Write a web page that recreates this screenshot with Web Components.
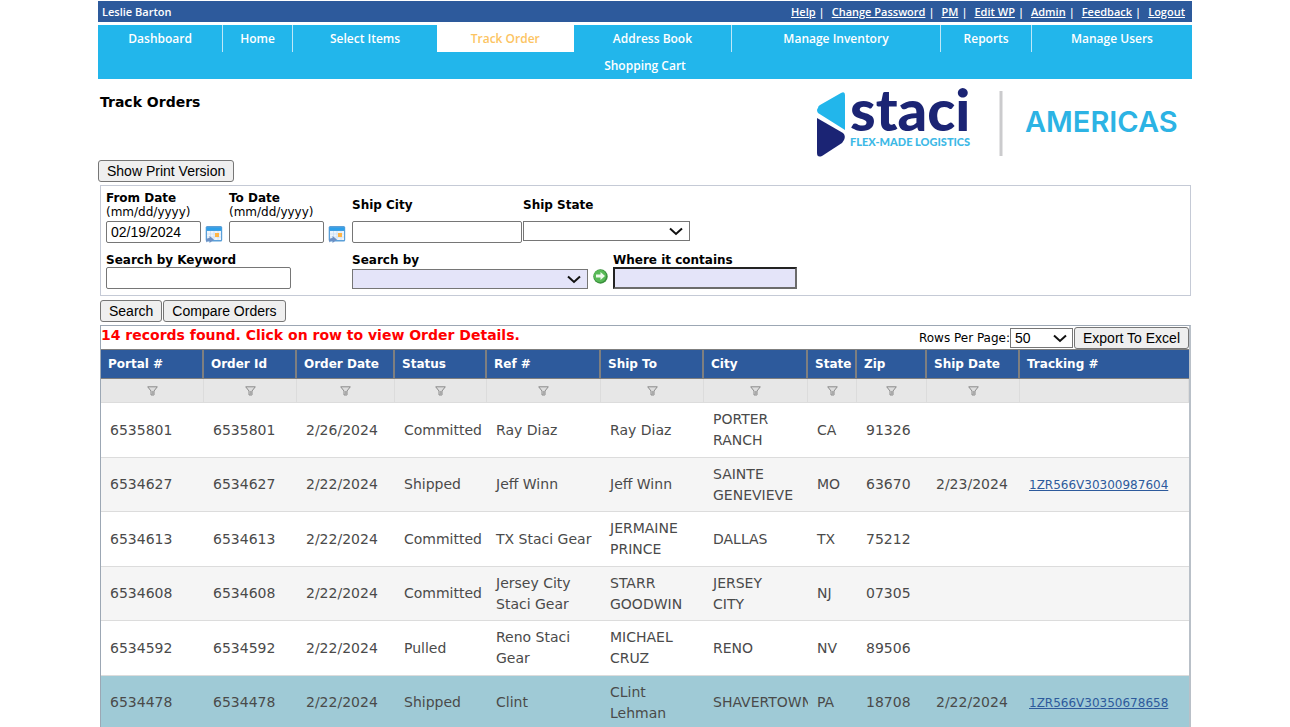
<!DOCTYPE html>
<html lang="en">
<head>
<meta charset="utf-8">
<title>Track Orders</title>
<style>
body { margin: 0; background: #fff; color: #000; font: 12px/14px "DejaVu Sans", Verdana, sans-serif; }
</style>
</head>
<body>
<track-orders-page></track-orders-page>
<script>
const controls = `
  *, *::before { box-sizing: border-box; }
  button { height: 22px; margin: 0; padding: 0 8px; border: 1px solid #767676; border-radius: 3px; background: #efefef; color: #000;
    font: 14px/20px "Liberation Sans", Arial, sans-serif; white-space: nowrap; }
  input, select { margin: 0; padding: 0 4px; border: 1px solid #767676; border-radius: 2px; background: #fff; color: #000;
    font: 14px/18px "Liberation Sans", Arial, sans-serif; }
  input { height: 22px; }
  select { height: 20px; appearance: none; width: 100%; border-radius: 0; display: block; }
  .drop { position: relative; display: block; }
  .drop svg { position: absolute; right: 7px; top: 6px; width: 14px; height: 9px; pointer-events: none; }
`;
const chevron = `<svg viewBox="0 0 14 9" aria-hidden="true"><path d="M1 1.5 7 7 13 1.5" fill="none" stroke="#111" stroke-width="2"/></svg>`;

function define(name, css, html) {
  const tpl = document.createElement('template');
  tpl.innerHTML = `<style>${css}</style>${html}`;
  customElements.define(name, class extends HTMLElement {
    constructor() {
      super();
      this.attachShadow({ mode: 'open' }).append(tpl.content.cloneNode(true));
    }
  });
}

define('top-bar', `
  :host { display: flex; justify-content: space-between; align-items: center; height: 21px; padding: 0 7px 0 4px;
    background: #2d5a9c; color: #fff; font: 600 11px/21px "Open Sans", sans-serif; }
  nav { display: flex; }
  a { color: inherit; }
  i { font-style: normal; margin: 0 7px 0 3px; }
`, `<span>Leslie Barton</span>
  <nav><a href="#">Help</a><i>|</i><a href="#">Change Password</a><i>|</i><a href="#">PM</a><i>|</i><a href="#">Edit WP</a><i>|</i><a href="#">Admin</a><i>|</i><a href="#">Feedback</a><i>|</i><a href="#">Logout</a></nav>`);

define('nav-item', `
  :host { display: block; flex: var(--w) 1 0; height: 27px; border-right: 1px solid #bfe8f8; box-sizing: border-box; text-align: center; }
  :host(:last-of-type), :host([active]) { border-color: transparent; }
  :host([plain]) { border: 0; }
  :host([active]) { background: #fff; color: #fcc462; }
  a { display: block; color: inherit; text-decoration: none; }
`, `<a href="#"><slot></slot></a>`);

define('main-nav', `
  :host { display: block; background: #22b6eb; color: #fff; font: 600 12px/27px "Open Sans", sans-serif; }
  nav { display: flex; }
`, `<nav>
    <nav-item style="--w:125">Dashboard</nav-item><nav-item style="--w:69">Home</nav-item>
    <nav-item style="--w:145" plain>Select Items</nav-item><nav-item style="--w:137" active>Track Order</nav-item>
    <nav-item style="--w:157">Address Book</nav-item><nav-item style="--w:210">Manage Inventory</nav-item>
    <nav-item style="--w:90">Reports</nav-item><nav-item style="--w:161" plain>Manage Users</nav-item>
  </nav>
  <nav><nav-item style="--w:1" plain>Shopping Cart</nav-item></nav>`);

define('brand-logo', `
  :host { display: block; }
  svg { display: block; width: 376px; height: 70px; overflow: visible; }
`, `<svg viewBox="0 0 376 70" role="img" aria-label="staci Americas">
    <path d="M2 18Q0 20 2 23L29 40V5Q29 1 25 3L4 15Q2 16 2 18Z" fill="#22b6eb"/>
    <path d="M1 28 27 43Q30 46 28 50L26 53 6 66Q1 68 1 63Z" fill="#1b2474"/>
    <text x="34" y="41" font-family="Lato, sans-serif" font-weight="900" font-size="58" fill="#1b2474">staci</text>
    <text x="34" y="56" font-family="Lato, sans-serif" font-weight="900" font-size="11" fill="#3db9e6">FLEX-MADE LOGISTICS</text>
    <path d="M185 1V66" stroke="#cbcbcd" stroke-width="3"/>
    <text x="209" y="42" font-family="Inter, sans-serif" font-weight="600" font-size="29" fill="#2cb3e4">AMERICAS</text>
  </svg>`);

define('calendar-button', `
  :host { display: block; width: 18px; height: 18px; }
  button { display: block; width: 18px; height: 18px; padding: 0; border: 0; background: none; }
  svg { display: block; }
`, `<button type="button" aria-label="Pick a date"><svg width="18" height="18" viewBox="0 0 18 18">
    <rect x=".7" y="1" width="16.5" height="15.5" rx="1.5" fill="#5b9fd8"/>
    <path d="M1.500 2.500h15v3h-15z" fill="#2da0ea"/><path d="M2 6h14v9H2z" fill="#eef5fc"/>
    <path d="M2 9h14M2 12h14M5.500 6v9M9 6v9M13 6v9" stroke="#c8dcf0" stroke-width=".7"/>
    <path d="M10 8h4v4h-4z" fill="#ffb545"/>
    <path d="M1.500 17.500Q0 13 4.500 13V11L9 14.500 4.500 18V15.500Q2.500 15.500 1.500 17.500Z" fill="#6c8fc4"/></svg></button>`);

define('search-form', controls + `
  :host { display: block; }
  form { display: flex; flex-direction: column; border: 1px solid #c5cad6; padding: 5px; height: 111px; }
  .row { display: flex; align-items: flex-end; }
  .row + .row { margin-top: 10px; }
  label { display: block; font-weight: 700; }
  label small { display: block; font: 12px/14px "DejaVu Sans", Verdana, sans-serif; }
  .date { width: 123px; }
  .date div { display: flex; gap: 4px; margin-top: 2px; align-items: flex-start; }
  .date input { width: 95px; }
  calendar-button { margin-top: 4px; }
  .city { width: 170px; margin-right: 1px; }
  .city input { width: 100%; display: block; margin-top: 9px; }
  .state { width: 167px; }
  .state .drop { margin: 9px 0 2px; }
  .key { width: 246px; }
  .key input { width: 185px; display: block; }
  .by { width: 236px; }
  .by .drop { margin-top: 2px; }
  .by select, .where input { background: #e4e4f9; }
  .where input { width: 184px; display: block; border: 2px solid #6b6b6b; border-top-color: #222; border-left-color: #222; border-radius: 0; }
  .go { width: 15px; height: 15px; padding: 0; border: 0; background: none; margin: 0 5px 5px; }
  .go svg { display: block; }
`, `<form>
    <div class="row">
      <div class="date"><label for="from">From Date<small>(mm/dd/yyyy)</small></label><div><input id="from" value="02/19/2024"><calendar-button></calendar-button></div></div>
      <div class="date"><label for="to">To Date<small>(mm/dd/yyyy)</small></label><div><input id="to"><calendar-button></calendar-button></div></div>
      <div class="city"><label for="city">Ship City</label><input id="city"></div>
      <div class="state"><label for="state">Ship State</label><span class="drop"><select id="state"><option></option></select>${chevron}</span></div>
    </div>
    <div class="row">
      <div class="key"><label for="key">Search by Keyword</label><input id="key"></div>
      <div class="by"><label for="by">Search by</label><span class="drop"><select id="by"><option></option></select>${chevron}</span></div>
      <button class="go" type="button" aria-label="Add condition"><svg width="15" height="15" viewBox="0 0 15 15"><circle cx="7.500" cy="7.500" r="7.200" fill="#3a8f3c"/><circle cx="7" cy="7" r="6.200" fill="#58ba57"/><path d="M3 5.500h4.500V3L12 7 7.500 11V8.500H3Z" fill="#eefaec"/></svg></button>
      <div class="where"><label for="where">Where it contains</label><input id="where"></div>
    </div>
  </form>`);

const columns = [['Portal #',103],['Order Id',93],['Order Date',98],['Status',92],['Ref #',114],['Ship To',103],['City',104],['State',49],['Zip',70],['Ship Date',93],['Tracking #',0]];
const orders = [
  ['6535801','2/26/2024','Committed','Ray Diaz','Ray Diaz','PORTER RANCH','CA','91326','',''],
  ['6534627','2/22/2024','Shipped','Jeff Winn','Jeff Winn','SAINTE GENEVIEVE','MO','63670','2/23/2024','1ZR566V30300987604'],
  ['6534613','2/22/2024','Committed','TX Staci Gear','JERMAINE PRINCE','DALLAS','TX','75212','',''],
  ['6534608','2/22/2024','Committed','Jersey City Staci Gear','STARR GOODWIN','JERSEY CITY','NJ','07305','',''],
  ['6534592','2/22/2024','Pulled','Reno Staci Gear','MICHAEL CRUZ','RENO','NV','89506','',''],
  ['6534478','2/22/2024','Shipped','Clint','CLint Lehman','SHAVERTOWN','PA','18708','2/22/2024','1ZR566V30350678658']
];
const funnel = `<svg width="11" height="10" viewBox="0 0 11 10" aria-hidden="true"><path d="M.7.8h9.600L7 5v4H4V5Z" fill="#ddd" stroke="#8b8b8b"/><path d="M5 5h2v4H5z" fill="#aaa"/></svg>`;

define('order-grid', controls + `
  :host { display: block; border: solid #9ca7b4; border-width: 1px 2px 0 1px; border-right-color: #b9c0c8; }
  header { display: flex; justify-content: space-between; height: 23px; }
  h2 { margin: 0; font: 700 14px/19px "DejaVu Sans", Verdana, sans-serif; color: #f00; }
  .tools { display: flex; align-items: center; }
  .tools .drop { width: 63px; margin-right: 1px; }
  .tools .drop svg { right: 6px; }
  table { width: 100%; table-layout: fixed; border-collapse: separate; border-spacing: 0; }
  th { height: 30px; padding: 0 0 0 7px; text-align: left; background: #2d5a9c; color: #fff; font-size: 12px;
    border: solid #7f7f7f; border-width: 1px 2px 1px 0; white-space: nowrap; }
  th:last-child { border-right: 0; }
  .filter td { height: 24px; padding: 0; background: #e7e7e7; text-align: center; line-height: 10px; border-right: 1px solid #dcdcdc; }
  .filter button { width: 22px; height: 20px; padding: 0; border: 0; background: none; display: inline-flex; align-items: center; justify-content: center; }
  td { padding: 0 9px; overflow: hidden; border-bottom: 1px solid #dcdcdc; color: #4a4a4a; font-size: 14px; line-height: 21px; }
  .order td { height: 55px; padding-right: 0; }
  .order td:nth-child(7) { padding-right: 12px; }
  .order:nth-child(even) td { height: 54px; background: #f5f5f5; }
  .order:last-child td { background: #9fcad6; }
  a { color: #2d5a9c; font-size: 12px; }
`, `<header><h2>14 records found. Click on row to view Order Details.</h2>
    <div class="tools"><label for="rows">Rows Per Page:</label><span class="drop"><select id="rows"><option>50</option></select>${chevron}</span><button type="button">Export To Excel</button></div></header>
  <table>
    <colgroup>${columns.map(c => c[1] ? `<col style="width:${c[1]}px">` : '<col>').join('')}</colgroup>
    <thead><tr>${columns.map(c => `<th scope="col">${c[0]}</th>`).join('')}</tr>
    <tr class="filter">${columns.map(c => `<td>${c[1] ? `<button type="button" aria-label="Filter ${c[0]}">${funnel}</button>` : ''}</td>`).join('')}</tr></thead>
    <tbody>${orders.map(o => `<tr class="order"><td>${o[0]}</td>${o.map((v, i) => `<td>${i === 9 && v ? `<a href="#">${v}</a>` : v}</td>`).join('')}</tr>`).join('')}</tbody>
  </table>`);

define('track-orders-page', controls + `
  :host { display: block; padding: 1px 98px 0; height: 100vh; overflow: hidden; box-sizing: border-box; }
  main-nav { margin-top: 3px; }
  .head { display: flex; justify-content: space-between; padding: 11px 0 0 2px; height: 81px; }
  h1 { margin: 0; font: 700 14px/24px "DejaVu Sans", Verdana, sans-serif; }
  main { padding: 0 1px 0 2px; }
  search-form { margin-top: 3px; }
  .actions { display: flex; gap: 1px; margin: 4px 0 3px; }
`, `<top-bar></top-bar>
  <main-nav></main-nav>
  <div class="head"><h1>Track Orders</h1><brand-logo></brand-logo></div>
  <button type="button">Show Print Version</button>
  <main>
    <search-form></search-form>
    <div class="actions"><button type="button">Search</button><button type="button">Compare Orders</button></div>
    <order-grid></order-grid>
  </main>`);
</script>
</body>
</html>
